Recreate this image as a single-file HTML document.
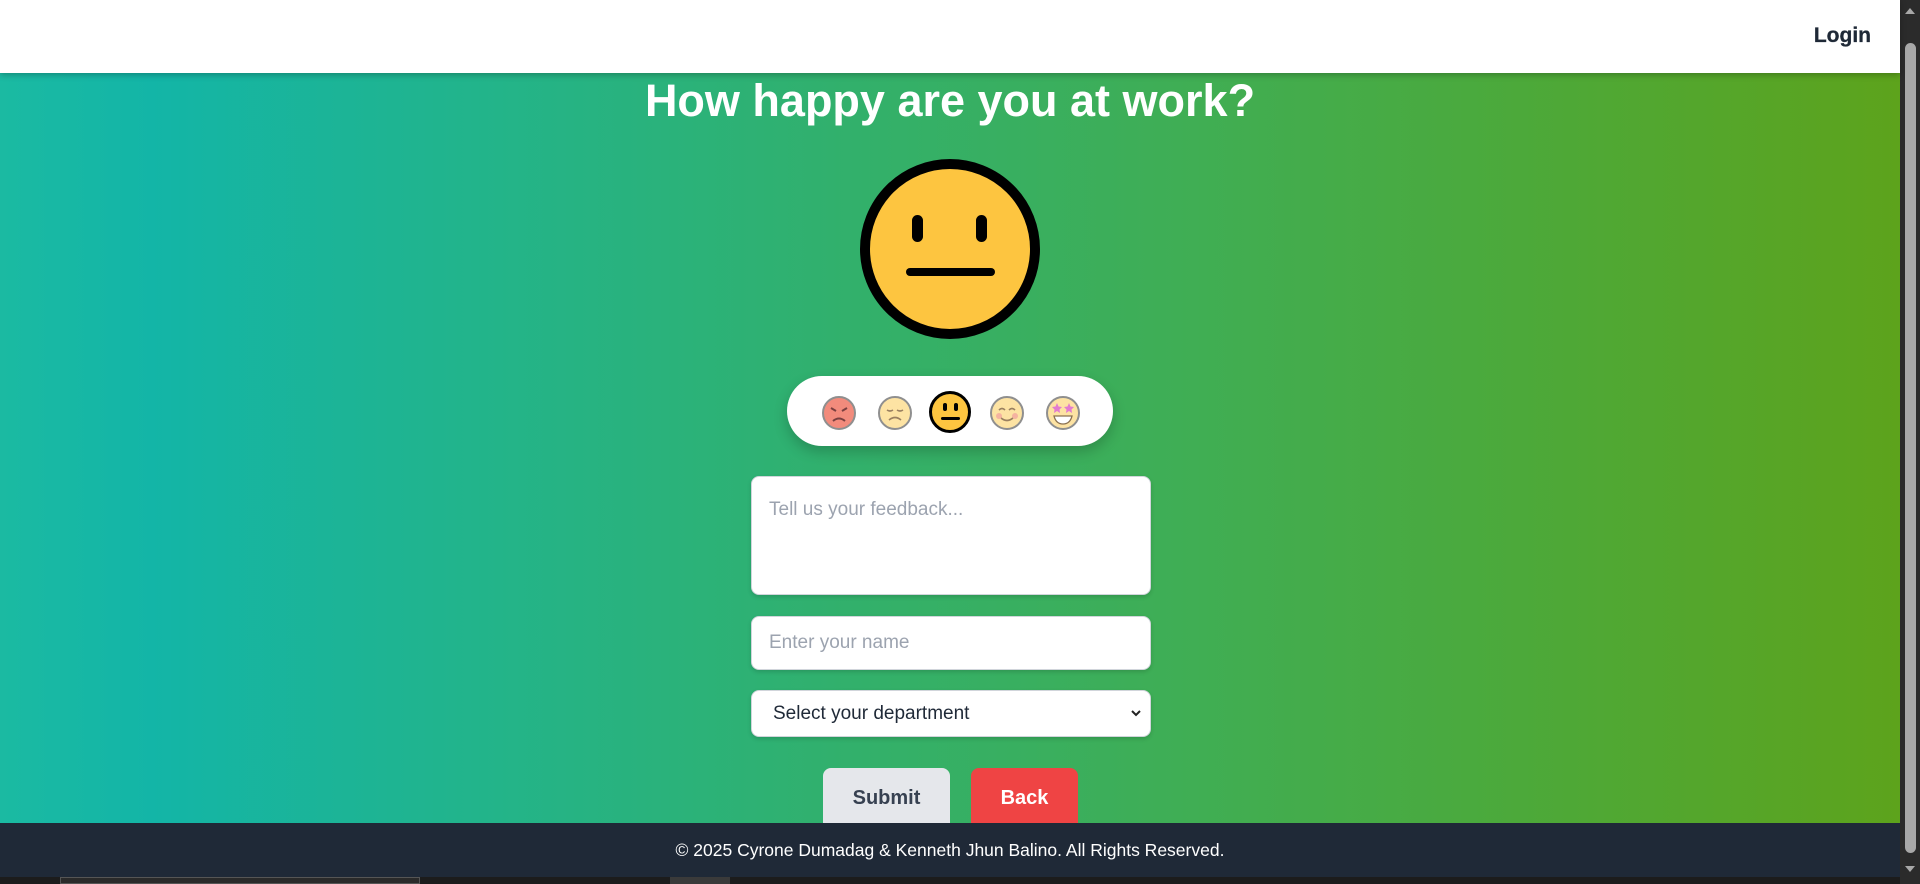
<!DOCTYPE html>
<html><head><meta charset="utf-8"><style>
*{box-sizing:border-box;margin:0;padding:0}
body{width:1920px;height:884px;overflow:hidden;position:relative;font-family:"Liberation Sans",Arial,sans-serif;background:#1c1c1c}
.main{position:absolute;left:0;top:0;width:1900px;height:823px;background:linear-gradient(90deg,#1bbaa2 0%,#13b5a7 8%,#22b48b 25%,#32b06b 45%,#3fae55 62%,#4ca93a 80%,#5da31c 100%)}
.nav{position:absolute;left:0;top:0;width:1900px;height:73px;background:#fff;box-shadow:0 2px 6px rgba(0,0,0,.25);z-index:2}
.login{position:absolute;right:29px;top:24px;font-size:21px;color:#1f2937;font-weight:600;-webkit-text-stroke:0.3px #1f2937}
h1{position:absolute;top:75px;left:0;width:1900px;text-align:center;color:#fff;font-size:45px;font-weight:bold}
.pill{position:absolute;left:787px;top:376px;width:326px;height:70px;background:#fff;border-radius:35px;box-shadow:0 6px 14px rgba(0,0,0,.2)}
.field{position:absolute;left:751px;width:400px;background:#fff;border-radius:8px;border:1px solid #d1d5db;box-shadow:0 2px 4px rgba(0,0,0,.15);font-size:19px;padding-left:17px}
.ph{color:#9ca3af}
.btn{position:absolute;top:768px;height:70px;border-radius:8px;font-weight:bold;font-size:20px;text-align:center;padding-top:19px}
.footer{position:absolute;left:0;top:823px;width:1900px;height:54px;background:#1f2937;color:#fff;text-align:center;font-size:17.5px;line-height:54px;z-index:3}
.sb{position:absolute;right:0;top:0;width:20px;height:884px;background:#2b2b2b}
</style></head><body>
<div class="main">
<h1>How happy are you at work?</h1>
<svg style="position:absolute;left:855px;top:154px" width="190" height="190" viewBox="0 0 190 190">
<circle cx="95" cy="95" r="85" fill="#fdc540" stroke="#000" stroke-width="10"/>
<rect x="57" y="61" width="11" height="27" rx="5.5" fill="#000"/>
<rect x="121" y="61" width="11" height="27" rx="5.5" fill="#000"/>
<rect x="51" y="114" width="89" height="8" rx="4" fill="#000"/>
</svg>
<div class="pill"></div>
<svg style="position:absolute;left:821px;top:395px" width="36" height="36" viewBox="0 0 36 36"><circle cx="18" cy="18" r="16" fill="#f28b7c" stroke="#8f8f8f" stroke-width="2"/><path d="M10 13l5 3M26 13l-5 3" stroke="#7a4040" stroke-width="2"/><path d="M12 26q6-5 12 0" stroke="#7a4040" stroke-width="2" fill="none"/></svg>
<svg style="position:absolute;left:877px;top:395px" width="36" height="36" viewBox="0 0 36 36"><circle cx="18" cy="18" r="16" fill="#fde3a3" stroke="#8f8f8f" stroke-width="2"/><path d="M10 15q3 2 6 0M20 15q3 2 6 0M12 25q6-5 12 0" stroke="#9a8060" stroke-width="1.6" fill="none"/></svg>
<svg style="position:absolute;left:928px;top:390px" width="44" height="44" viewBox="0 0 44 44"><circle cx="22" cy="22" r="19.5" fill="#fdc540" stroke="#000" stroke-width="3"/><rect x="15" y="13" width="4" height="8" rx="2"/><rect x="26" y="13" width="4" height="8" rx="2"/><rect x="13" y="27" width="19" height="3" rx="1.5"/></svg>
<svg style="position:absolute;left:989px;top:395px" width="36" height="36" viewBox="0 0 36 36"><circle cx="18" cy="18" r="16" fill="#fde3a3" stroke="#8f8f8f" stroke-width="2"/><path d="M10 15q3-3 6 0M20 15q3-3 6 0M11 22q7 7 14 0" stroke="#9a8060" stroke-width="1.6" fill="none"/><circle cx="10" cy="21" r="3" fill="#f5b3a0"/><circle cx="26" cy="21" r="3" fill="#f5b3a0"/></svg>
<svg style="position:absolute;left:1045px;top:395px" width="36" height="36" viewBox="0 0 36 36"><circle cx="18" cy="18" r="16" fill="#fde3a3" stroke="#8f8f8f" stroke-width="2"/><path d="M12 8l1.5 3.5 3.5.5-2.5 2.5.5 3.5-3-2-3 2 .5-3.5-2.5-2.5 3.5-.5zM24 8l1.5 3.5 3.5.5-2.5 2.5.5 3.5-3-2-3 2 .5-3.5-2.5-2.5 3.5-.5z" fill="#e27bd0"/><path d="M9 21h18q-2 8-9 8t-9-8z" fill="#fff" stroke="#8a7050" stroke-width="1.3"/></svg>
<div class="field" style="top:476px;height:119px;padding-top:22px"><span class="ph">Tell us your feedback...</span></div>
<div class="field" style="top:616px;height:54px;line-height:52px"><span class="ph">Enter your name</span></div>
<div class="field" style="top:690px;height:47px;line-height:45px;color:#1f2937;padding-left:21px">Select your department<svg style="position:absolute;right:8px;top:18px" width="12" height="10" viewBox="0 0 12 10"><path d="M2 2l4 4 4-4" stroke="#222" stroke-width="2" fill="none"/></svg></div>
<div class="btn" style="left:823px;width:127px;background:#e5e7eb;color:#374151">Submit</div>
<div class="btn" style="left:971px;width:107px;background:#ef4444;color:#fff">Back</div>
</div>
<div class="nav"><span class="login">Login</span></div>
<div class="footer">© 2025 Cyrone Dumadag &amp; Kenneth Jhun Balino. All Rights Reserved.</div>
<div style="position:absolute;left:60px;top:877px;width:360px;height:7px;background:#2a2a2a;border:1px solid #555"></div>
<div style="position:absolute;left:670px;top:877px;width:60px;height:7px;background:#3a3a3a"></div>
<div class="sb"><div style="position:absolute;left:5px;top:43px;width:11px;height:810px;background:#a8a8a8;border-radius:6px"></div>
<div style="position:absolute;left:5px;top:8px;border:5px solid transparent;border-bottom:6px solid #a8a8a8;border-top:0"></div>
<div style="position:absolute;left:5px;top:866px;border:5px solid transparent;border-top:6px solid #a8a8a8;border-bottom:0"></div></div>
</body></html>
